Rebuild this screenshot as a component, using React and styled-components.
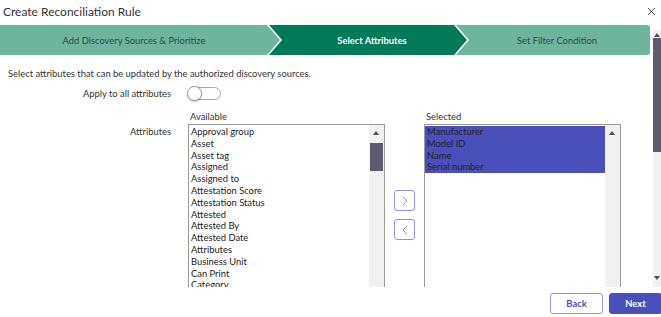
import React from "react";
import styled, { createGlobalStyle } from "styled-components";

const Global = createGlobalStyle`
  html, body { margin: 0; padding: 0; background: #fff; }
  body { width: 661px; height: 317px; overflow: hidden; font-family: Lato, "Open Sans", sans-serif; color: #333; }
  * { box-sizing: border-box; }
`;

const Modal = styled.div`
  width: 661px;
  height: 317px;
  display: flex;
  flex-direction: column;
`;

const Header = styled.div`
  height: 25px;
  display: flex;
  align-items: center;
  justify-content: space-between;
  padding: 0 4px 0 3px;
`;

const Title = styled.h1`
  margin: 0;
  font-size: 12px;
  font-weight: 400;
  color: #333;
  position: relative;
  top: -1px;
`;

const Close = styled.button`
  border: 0;
  background: none;
  padding: 0;
  width: 10px;
  height: 10px;
  display: flex;
  position: relative;
  top: -1px;
`;

const BodyWrap = styled.div`
  height: 262px;
  display: flex;
`;

const Content = styled.div`
  flex: 1;
  overflow: hidden;
`;

const PageScroll = styled.div`
  width: 8px;
  margin: 5px 0 0 3px;
  height: 257px;
  background: #f1f1f1;
  position: relative;
`;

const PageThumb = styled.div`
  position: absolute;
  left: 0;
  right: 0;
  top: 8px;
  height: 114px;
  background: #5d5b6d;
`;

const Tri = styled.div`
  position: absolute;
  left: ${p => p.$left}px;
  ${p => (p.$down ? `bottom: ${p.$off}px;` : `top: ${p.$off}px;`)}
  width: 0;
  height: 0;
  border-left: 3.5px solid transparent;
  border-right: 3.5px solid transparent;
  ${p => (p.$down ? "border-top: 4px solid #505050;" : "border-bottom: 4px solid #505050;")}
`;

const Stepper = styled.div`
  display: flex;
  width: 650px;
  height: 30px;
`;

const Step = styled.div`
  width: ${p => p.$w}px;
  margin-left: ${p => (p.$first ? 0 : -11)}px;
  height: 30px;
  display: flex;
  align-items: center;
  justify-content: center;
  padding-left: ${p => (p.$first ? 0 : 8)}px;
  font-size: 9.4px;
  background: ${p => (p.$active ? "#037a58" : "#6eb59d")};
  color: ${p => (p.$active ? "#fff" : "#2f4a42")};
  font-weight: ${p => (p.$active ? 700 : 400)};
  border-radius: ${p => (p.$last ? "0 3px 3px 0" : "0")};
  clip-path: ${p =>
    p.$first
      ? "polygon(0 0, calc(100% - 13px) 0, 100% 50%, calc(100% - 13px) 100%, 0 100%)"
      : p.$last
      ? "polygon(0 0, 100% 0, 100% 100%, 0 100%, 13px 50%)"
      : "polygon(0 0, calc(100% - 13px) 0, 100% 50%, calc(100% - 13px) 100%, 0 100%, 13px 50%)"};
`;

const CheckMark = styled.svg`
  margin-left: 4px;
  flex: none;
`;

const Intro = styled.p`
  margin: 13px 0 0 8px;
  font-size: 9.4px;
  line-height: 12px;
  color: #333;
`;

const Row = styled.div`
  display: flex;
  align-items: ${p => p.$align || "center"};
  margin-top: ${p => p.$mt}px;
`;

const Label = styled.div`
  width: 171px;
  text-align: right;
  font-size: 9.4px;
  color: #333;
  padding-top: ${p => p.$pt || 0}px;
`;

const Toggle = styled.div`
  margin-left: 17px;
  width: 33px;
  height: 13px;
  border: 1px solid #aaa;
  border-radius: 7px;
  position: relative;
  background: #fff;
`;

const Knob = styled.div`
  position: absolute;
  left: -2px;
  top: -2px;
  width: 15px;
  height: 15px;
  border-radius: 50%;
  background: #fff;
  border: 1px solid #999;
  box-shadow: 0 1px 2px rgba(0, 0, 0, 0.25);
`;

const Picker = styled.div`
  margin-left: 17px;
  display: flex;
  align-items: flex-start;
`;

const Column = styled.div`
  display: flex;
  flex-direction: column;
`;

const ColLabel = styled.div`
  font-size: 9.4px;
  color: #333;
  height: 13px;
  line-height: 13px;
  padding-left: 2px;
  margin-bottom: 1px;
`;

const ListBox = styled.div`
  width: 197px;
  height: 180px;
  border: 1px solid #9a9a9a;
  display: flex;
  background: #fff;
`;

const Items = styled.div`
  flex: 1;
  padding-top: 1px;
`;

const Item = styled.div`
  font-size: 9.4px;
  line-height: 11.8px;
  height: 11.8px;
  padding-left: 2px;
  color: #222;
  background: ${p => (p.$sel ? "#4b4fbb" : "transparent")};
  white-space: nowrap;
`;

const ListScroll = styled.div`
  width: 15px;
  background: #f1f1f1;
  position: relative;
`;

const ListThumb = styled.div`
  position: absolute;
  left: 1px;
  right: 1px;
  top: 18px;
  height: 28px;
  background: #5d5b6d;
`;

const Movers = styled.div`
  display: flex;
  flex-direction: column;
  gap: 8px;
  margin: 80px 9px 0 9px;
`;

const MoveBtn = styled.button`
  width: 21px;
  height: 21px;
  padding: 0;
  border: 1px solid #8f93e4;
  border-radius: 3px;
  background: #fff;
  display: flex;
  align-items: center;
  justify-content: center;
`;

const Footer = styled.div`
  height: 30px;
  display: flex;
  justify-content: flex-end;
  align-items: flex-start;
  gap: 6px;
  padding-top: 6px;
  margin-right: -1px;
`;

const Btn = styled.button`
  width: 53px;
  height: 21px;
  border-radius: 3px;
  font-family: Lato, sans-serif;
  font-weight: 700;
  font-size: 9.4px;
  border: 1px solid ${p => (p.$primary ? "#4b4fbb" : "#9598e6")};
  background: ${p => (p.$primary ? "#4b4fbb" : "#fff")};
  color: ${p => (p.$primary ? "#fff" : "#4b4fbb")};
  padding: 0;
`;

const available = [
  "Approval group",
  "Asset",
  "Asset tag",
  "Assigned",
  "Assigned to",
  "Attestation Score",
  "Attestation Status",
  "Attested",
  "Attested By",
  "Attested Date",
  "Attributes",
  "Business Unit",
  "Can Print",
  "Category",
  "Checked in",
];

const selected = ["Manufacturer", "Model ID", "Name", "Serial number"];

const Chevron = ({ dir }) => (
  <svg width="8" height="10" viewBox="0 0 8 10">
    <path
      d={dir === "right" ? "M2 1 L6 5 L2 9" : "M6 1 L2 5 L6 9"}
      fill="none"
      stroke="#8f93e4"
      strokeWidth="1"
    />
  </svg>
);

export default function App() {
  return (
    <>
      <Global />
      <Modal>
        <Header>
          <Title>Create Reconciliation Rule</Title>
          <Close aria-label="close">
            <svg width="9" height="9" viewBox="0 0 9 9">
              <path d="M1 1 L8 8 M8 1 L1 8" stroke="#555" strokeWidth="1" />
            </svg>
          </Close>
        </Header>
        <BodyWrap>
          <Content>
            <Stepper>
              <Step $first $w={280}>
                Add Discovery Sources &amp; Prioritize
                <CheckMark width="8" height="6" viewBox="0 0 8 6">
                  <path d="M0.5 3 L3 5.5 L7.5 0.5" fill="none" stroke="#7f9fca" strokeWidth="0.9" />
                </CheckMark>
              </Step>
              <Step $active $w={198}>Select Attributes</Step>
              <Step $last $w={194}>Set Filter Condition</Step>
            </Stepper>
            <Intro>Select attributes that can be updated by the authorized discovery sources.</Intro>
            <Row $mt={7}>
              <Label>Apply to all attributes</Label>
              <Toggle>
                <Knob />
              </Toggle>
            </Row>
            <Row $mt={10} $align="flex-start">
              <Label $pt={16}>Attributes</Label>
              <Picker>
                <Column>
                  <ColLabel>Available</ColLabel>
                  <ListBox>
                    <Items>
                      {available.map(a => (
                        <Item key={a}>{a}</Item>
                      ))}
                    </Items>
                    <ListScroll>
                      <Tri $left={4} $off={6} />
                      <ListThumb />
                    </ListScroll>
                  </ListBox>
                </Column>
                <Movers>
                  <MoveBtn aria-label="add">
                    <Chevron dir="right" />
                  </MoveBtn>
                  <MoveBtn aria-label="remove">
                    <Chevron dir="left" />
                  </MoveBtn>
                </Movers>
                <Column>
                  <ColLabel>Selected</ColLabel>
                  <ListBox>
                    <Items>
                      {selected.map(a => (
                        <Item key={a} $sel>
                          {a}
                        </Item>
                      ))}
                    </Items>
                    <ListScroll>
                      <Tri $left={4} $off={6} />
                    </ListScroll>
                  </ListBox>
                </Column>
              </Picker>
            </Row>
          </Content>
          <PageScroll>
            <Tri $left={1} $off={3} />
            <PageThumb />
            <Tri $left={1} $off={7} $down />
          </PageScroll>
        </BodyWrap>
        <Footer>
          <Btn>Back</Btn>
          <Btn $primary>Next</Btn>
        </Footer>
      </Modal>
    </>
  );
}
